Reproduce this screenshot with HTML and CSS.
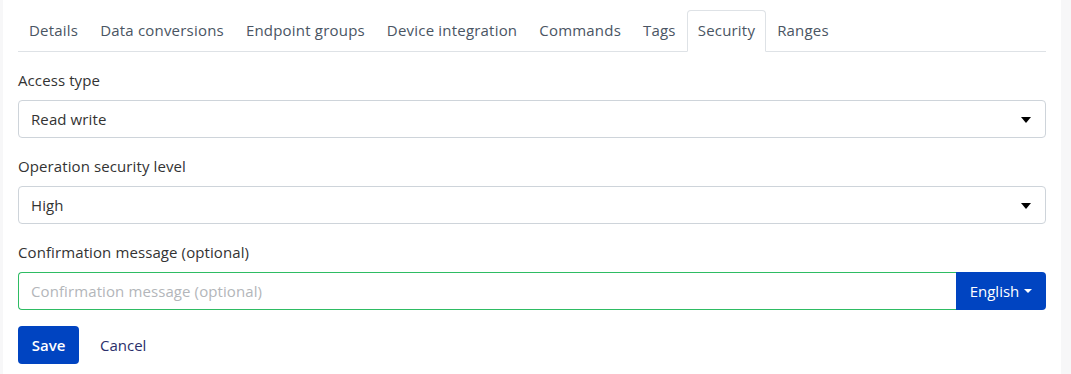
FILE: index.html
```html
<!DOCTYPE html>
<html>
<head>
<meta charset="utf-8">
<link rel="stylesheet" href="styles.css">
</head>
<body>
<div class="card">
  <ul class="tabs">
    <li class="tab">Details</li>
    <li class="tab">Data conversions</li>
    <li class="tab">Endpoint groups</li>
    <li class="tab">Device integration</li>
    <li class="tab">Commands</li>
    <li class="tab">Tags</li>
    <li class="tab active">Security</li>
    <li class="tab">Ranges</li>
  </ul>
  <div class="field">
    <label class="label">Access type</label>
    <div class="select"><span>Read write</span><span class="caret"></span></div>
  </div>
  <div class="field">
    <label class="label">Operation security level</label>
    <div class="select"><span>High</span><span class="caret"></span></div>
  </div>
  <div class="field">
    <label class="label">Confirmation message (optional)</label>
    <div class="group">
      <input class="input" placeholder="Confirmation message (optional)">
      <button class="lang">English<span class="caret-sm"></span></button>
    </div>
  </div>
  <div class="actions">
    <button class="save">Save</button>
    <button class="cancel">Cancel</button>
  </div>
</div>
</body>
</html>
```

FILE: styles.css
```css
html, body {
  margin: 0;
  padding: 0;
  background: #f7f7f8;
  font-family: "Open Sans", "Noto Sans", sans-serif;
  font-size: 15px;
}
.card {
  margin-left: 3px;
  width: 1058px;
  height: 374px;
  box-sizing: border-box;
  background: #fff;
  padding: 10px 15px 0 15px;
}
.tabs {
  list-style: none;
  margin: 0;
  padding: 0;
  display: flex;
  border-bottom: 1px solid #dee2e6;
  width: 1028px;
}
.tab {
  padding: 9px 10px 10px 10px;
  color: #4a5563;
  line-height: 21px;
  border: 1px solid transparent;
  border-top-left-radius: 4px;
  border-top-right-radius: 4px;
  margin-bottom: -1px;
  letter-spacing: 0.2px;
}
.tab.active {
  border-color: #dee2e6 #dee2e6 #fff;
  background: #fff;
}
.field {
  margin-top: 18px;
}
.field + .field {
  margin-top: 18px;
}
.label {
  display: block;
  color: #333;
  line-height: 21px;
  margin-bottom: 9px;
  letter-spacing: 0.1px;
}
.select {
  height: 38px;
  box-sizing: border-box;
  border: 1px solid #ced4da;
  border-radius: 4px;
  display: flex;
  align-items: center;
  justify-content: space-between;
  padding: 0 14px 0 12px;
  color: #333;
  width: 1028px;
  letter-spacing: 0.1px;
}
.caret {
  width: 0;
  height: 0;
  border-left: 5px solid transparent;
  border-right: 5px solid transparent;
  border-top: 6px solid #000;
  margin-top: 2px;
}
.group {
  display: flex;
  width: 1028px;
  height: 38px;
}
.input {
  flex: 1;
  box-sizing: border-box;
  height: 38px;
  border: 1px solid #2ebc63;
  border-right: none;
  border-radius: 4px 0 0 4px;
  padding: 0 12px;
  font-family: inherit;
  font-size: 15px;
  color: #333;
  outline: none;
  letter-spacing: 0.1px;
}
.input::placeholder {
  color: #b3b6ba;
}
.lang {
  width: 90px;
  height: 38px;
  border: none;
  background: #0044c1;
  color: #fff;
  font-family: inherit;
  font-size: 15px;
  border-radius: 0 4px 4px 0;
  display: flex;
  align-items: center;
  justify-content: center;
  gap: 5px;
  padding: 0;
}
.caret-sm {
  width: 0;
  height: 0;
  border-left: 4px solid transparent;
  border-right: 4px solid transparent;
  border-top: 4px solid #fff;
}
.actions {
  display: flex;
  align-items: center;
  margin-top: 16px;
  gap: 6px;
}
.save {
  height: 38px;
  width: 61px;
  border: none;
  border-radius: 4px;
  background: #0044c1;
  color: #fff;
  font-family: inherit;
  font-size: 15px;
  font-weight: 600;
  padding: 0;
}
.cancel {
  height: 38px;
  border: none;
  background: transparent;
  color: #2b2f6b;
  font-family: inherit;
  font-size: 15px;
  padding: 0 15px;
}
```
